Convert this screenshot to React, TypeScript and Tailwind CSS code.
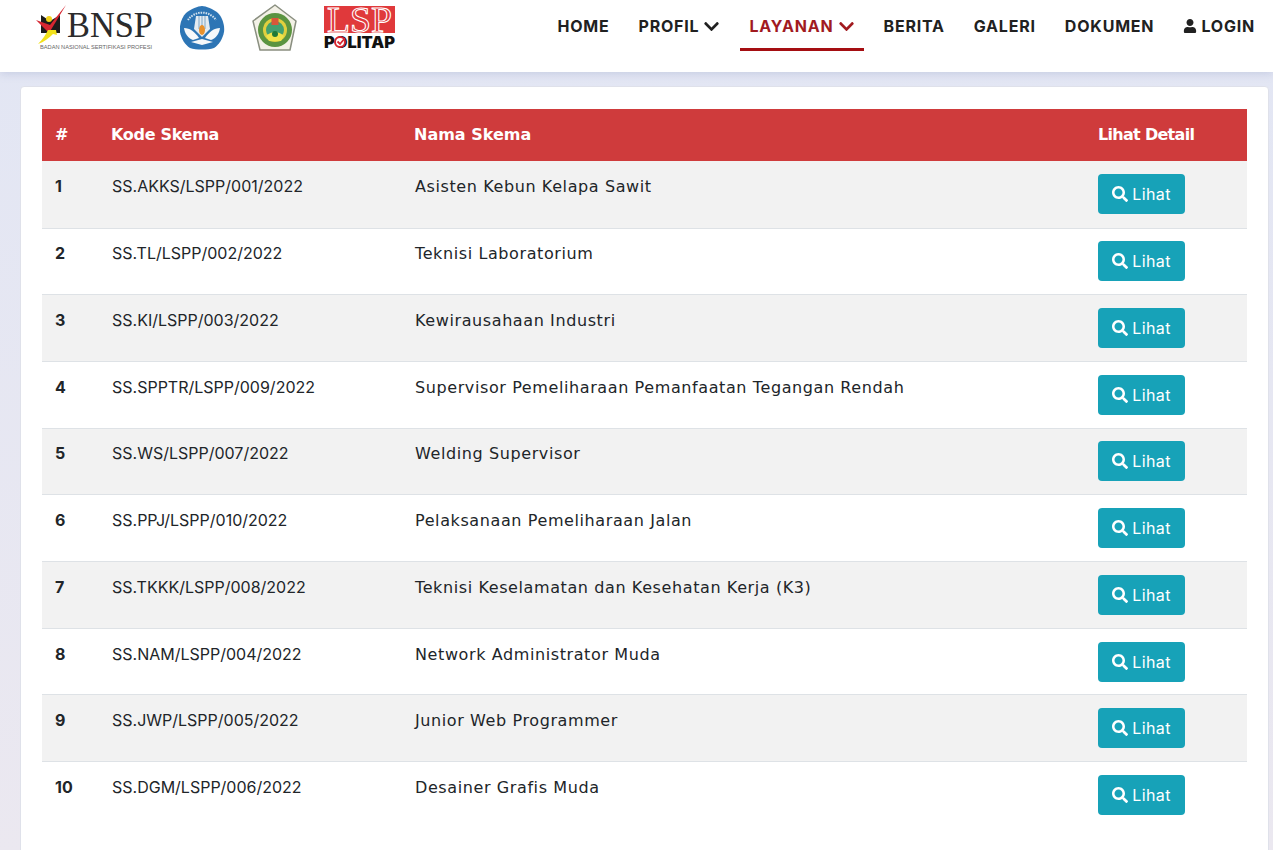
import type { ReactNode } from "react";
import { FaChevronDown, FaSearch, FaUser } from "react-icons/fa";

interface Skema {
    kode: string,
    nama: string,
}

const skemaList: Array<Skema> = [
    { kode: "SS.AKKS/LSPP/001/2022", nama: "Asisten Kebun Kelapa Sawit" },
    { kode: "SS.TL/LSPP/002/2022", nama: "Teknisi Laboratorium" },
    { kode: "SS.KI/LSPP/003/2022", nama: "Kewirausahaan Industri" },
    { kode: "SS.SPPTR/LSPP/009/2022", nama: "Supervisor Pemeliharaan Pemanfaatan Tegangan Rendah" },
    { kode: "SS.WS/LSPP/007/2022", nama: "Welding Supervisor" },
    { kode: "SS.PPJ/LSPP/010/2022", nama: "Pelaksanaan Pemeliharaan Jalan" },
    { kode: "SS.TKKK/LSPP/008/2022", nama: "Teknisi Keselamatan dan Kesehatan Kerja (K3)" },
    { kode: "SS.NAM/LSPP/004/2022", nama: "Network Administrator Muda" },
    { kode: "SS.JWP/LSPP/005/2022", nama: "Junior Web Programmer" },
    { kode: "SS.DGM/LSPP/006/2022", nama: "Desainer Grafis Muda" },
]

function Logos() {
    return (
        <div className="flex items-start">
            {/* BNSP */}
            <svg width="118" height="54" viewBox="0 0 118 54" className="ml-[36px] overflow-visible">
                <path d="M5 15 L14 21 L24 15 L24 33 L5 33 Z" fill="#1c1c1c" />
                <circle cx="13" cy="19" r="3" fill="#f2d21b" />
                <path d="M0 20 L13 33 L30 5 L14 25 Z" fill="#d62631" />
                <path d="M2 44 C7 39 10 34 12 30 L20 30 L21 35 L17 34 C13 38 8 42 2 44 Z" fill="#f2e21b" />
                <text x="31" y="37" fontSize="36" fontFamily="'Liberation Serif', serif" fill="#2b2b2b" textLength="86" lengthAdjust="spacingAndGlyphs">BNSP</text>
                <text x="4" y="49" fontSize="6" fontFamily="'Liberation Sans', sans-serif" fill="#666" textLength="112" lengthAdjust="spacingAndGlyphs">BADAN NASIONAL SERTIFIKASI PROFESI</text>
            </svg>
            {/* Kemdikbud */}
            <svg width="46" height="46" viewBox="0 0 46 46" className="ml-[26px] mt-[5px]">
                <path d="M22 1 C26 1 33 4 38 8 C42 12 45 20 44 27 C43 33 39 40 34 43 C28 45 16 45 10 43 C5 40 1 33 0 27 C-1 20 2 12 6 8 C11 4 18 1 22 1 Z" fill="#2d75b5" />
                <path d="M8 15 A17 17 0 0 1 36 15" fill="none" stroke="#cfe0ee" strokeWidth="2" strokeDasharray="1.5 1" />
                <path d="M16 11 L28 11 L30 24 L22 32 L14 24 Z" fill="#e4ebf1" />
                <path d="M19 11 V24 M22 11 V24 M25 11 V24" stroke="#7fa7c8" strokeWidth="1" />
                <path d="M4 23 C10 23 15 27 19 33 L13 35 C8 33 5 29 4 23 Z" fill="#f6f8fa" />
                <path d="M40 23 C34 23 29 27 25 33 L31 35 C36 33 39 29 40 23 Z" fill="#f6f8fa" />
                <ellipse cx="22" cy="25" rx="3" ry="5" fill="#e8912d" />
                <path d="M11 37 L22 34 L33 37 L22 40 Z" fill="#f6f8fa" />
            </svg>
            {/* Politap */}
            <svg width="46" height="50" viewBox="0 0 46 50" className="ml-[26px] mt-[4px]">
                <path d="M23 1 L44 17 L38 46 L8 46 L1 17 Z" fill="#f3f1e6" stroke="#8a8f80" strokeWidth="1.5" strokeLinejoin="round" />
                <circle cx="23" cy="26" r="17" fill="#5b9440" />
                <circle cx="23" cy="26" r="12" fill="#e0cf3e" />
                <circle cx="23" cy="26" r="9" fill="#43a06f" />
                <rect x="19.5" y="14" width="7" height="7" fill="#d8573a" />
                <path d="M14 32 Q23 24 32 32 L29 37 L17 37 Z" fill="#efe34a" />
                <circle cx="23" cy="30" r="3" fill="#1f7a38" />
            </svg>
            {/* LSP Politap */}
            <svg width="72" height="50" viewBox="0 0 72 50" className="ml-[26px] overflow-visible">
                <rect x="0" y="6" width="71" height="27" fill="#e0393b" />
                <text x="3" y="32" fontSize="36" fontFamily="'Liberation Serif', serif" fill="#e0393b" stroke="#fff" strokeWidth="1" textLength="65" lengthAdjust="spacingAndGlyphs">LSP</text>
                <text x="0" y="48" fontSize="16" fontWeight="900" fontFamily="Inter, sans-serif" fill="#111" textLength="71" lengthAdjust="spacingAndGlyphs">POLITAP</text>
                <circle cx="16" cy="42" r="5" fill="#fff" stroke="#d62631" strokeWidth="2" />
                <path d="M13.5 41.5 L16 44 L21 38" fill="none" stroke="#d62631" strokeWidth="1.8" />
            </svg>
        </div>
    )
}

function NavItem({ label, icon, caret, active }: { label: string, icon?: ReactNode, caret?: boolean, active?: boolean }) {
    return (
        <div className={`h-[51px] pt-[4px] px-[9px] mx-[5.5px] last:mr-0 flex items-center border-b-[3px] text-[16px] font-bold tracking-[.8px] ${active ? 'border-[#a50e12] text-[#a11a1f]' : 'border-transparent text-[#212121]'}`}>
            {icon}
            {label}
            {caret ? <FaChevronDown className="text-[17px] ml-[4px]" /> : <></>}
        </div>
    )
}

export default function App() {
    return (
        <div className="h-[850px] overflow-hidden bg-gradient-to-b from-[#e2e6f4] to-[#ebe8f0] font-['Inter',sans-serif]">
            <div className="h-[72px] bg-white flex justify-between shadow-[0_2px_8px_rgba(120,130,180,.25)] relative">
                <Logos />
                <nav className="flex items-start mr-[9px]">
                    <NavItem label="HOME" />
                    <NavItem label="PROFIL" caret />
                    <NavItem label="LAYANAN" caret active />
                    <NavItem label="BERITA" />
                    <NavItem label="GALERI" />
                    <NavItem label="DOKUMEN" />
                    <NavItem label="LOGIN" icon={<FaUser className="text-[14px] mr-[4px]" />} />
                </nav>
            </div>

            <div className="ml-[20px] mr-[4px] mt-[14px] h-[800px] bg-white rounded-[4px] border border-[#dfe1ea] pt-[22px] px-[21px]">
                <table className="w-[1205px] table-fixed border-collapse text-[16px] text-[#212529]">
                    <thead>
                        <tr className="h-[52.4px] bg-[#cf3b3c] text-white text-left font-['DejaVu_Sans',sans-serif] font-bold">
                            <th className="w-[69px] pl-[13px]">#</th>
                            <th className="w-[303px] tracking-[-.3px]">Kode Skema</th>
                            <th className="w-[683px]">Nama Skema</th>
                            <th className="pl-[1px] tracking-[-.7px]">Lihat Detail</th>
                        </tr>
                    </thead>
                    <tbody>
                        {
                            skemaList.map((skema, index) => (
                                <tr key={skema.kode} className={`h-[66.7px] ${index % 2 == 0 ? 'bg-[#f2f2f2]' : 'bg-white'} ${index < skemaList.length - 1 ? 'border-b border-[#dee2e6]' : ''}`}>
                                    <td className="pl-[13px] pb-[16px] font-bold">{index + 1}</td>
                                    <td className="pb-[16px] pl-[1px]">{skema.kode}</td>
                                    <td className="pb-[14px] pl-[1px] font-['DejaVu_Sans',sans-serif] tracking-[.6px]">{skema.nama}</td>
                                    <td className="pl-[1px]">
                                        <button className="w-[87px] h-[40px] rounded-[4px] bg-[#17a2b8] text-white flex items-center justify-center gap-[4px] tracking-[.4px]">
                                            <FaSearch className="text-[16px]" />Lihat
                                        </button>
                                    </td>
                                </tr>
                            ))
                        }
                    </tbody>
                </table>
            </div>
        </div>
    )
}
